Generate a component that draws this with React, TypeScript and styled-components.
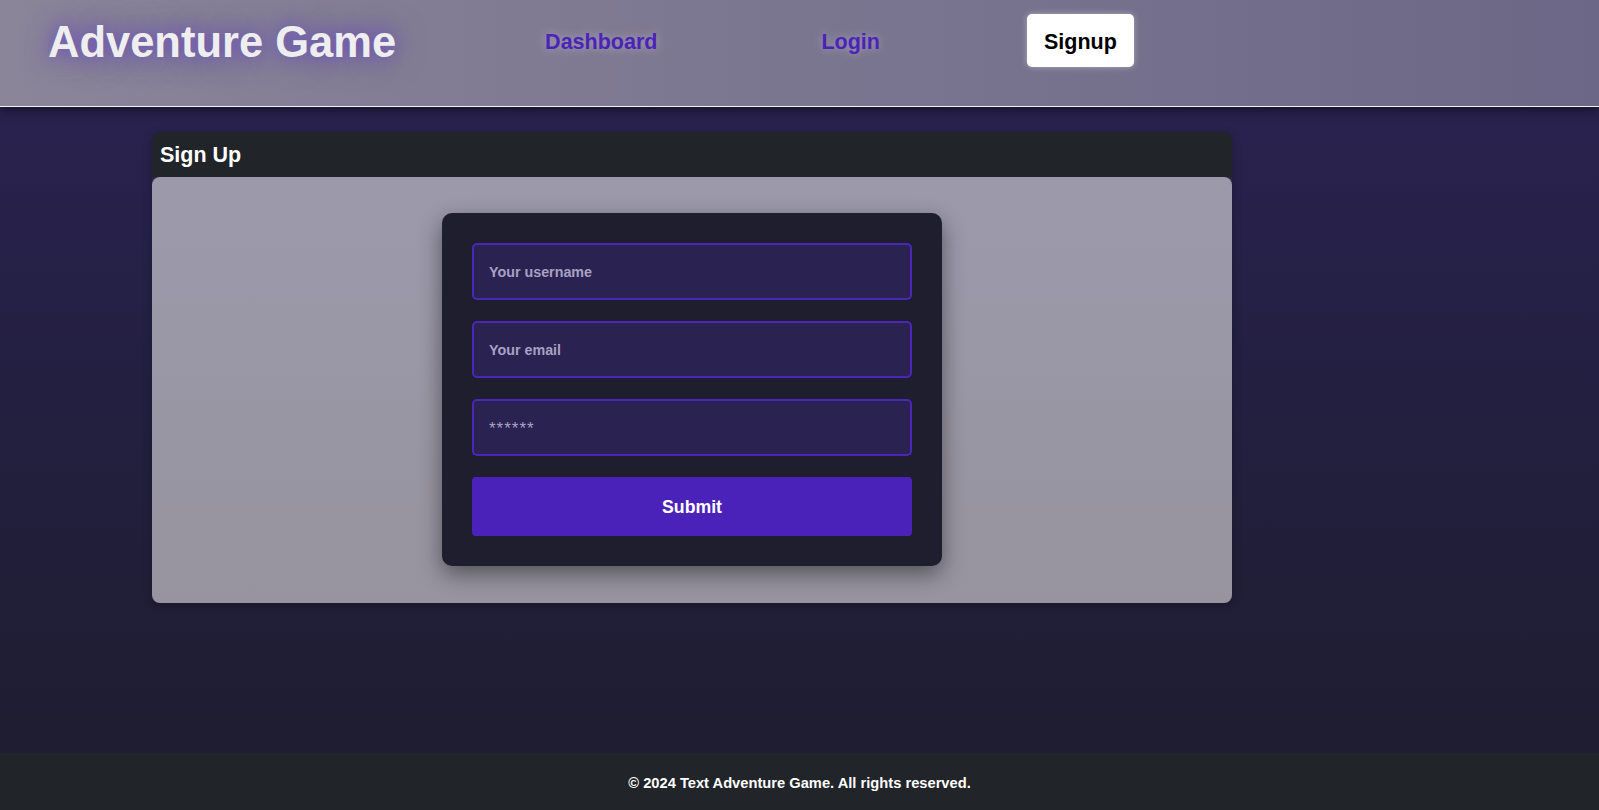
import React from 'react'
import styled, { createGlobalStyle } from 'styled-components'

const GlobalStyle = createGlobalStyle`
  * {
    box-sizing: border-box;
  }
  html,
  body {
    margin: 0;
    padding: 0;
  }
  body {
    font-family: 'Liberation Sans', Arial, sans-serif;
    font-weight: 700;
    background: #211e35;
  }
`

const Page = styled.div`
  min-height: 100vh;
  display: flex;
  flex-direction: column;
`

const Header = styled.header`
  position: relative;
  z-index: 2;
  height: 107px;
  display: flex;
  align-items: flex-start;
  gap: 132px;
  padding: 14px 0 0 48px;
  background: linear-gradient(90deg, #8a8599 0%, #7b7690 50%, #6c6786 100%);
  border-bottom: 1.5px solid rgba(255, 255, 255, 0.9);
  box-shadow: 0 4px 10px rgba(0, 0, 0, 0.45);
`

const Brand = styled.h1`
  margin: 0;
  height: 53px;
  padding-top: 4px;
  display: flex;
  align-items: center;
  font-size: 43.5px;
  font-weight: 700;
  color: #eeeeef;
  text-shadow: 0 0 18px rgba(104, 74, 190, 0.95), 0 0 30px rgba(104, 74, 190, 0.5);
  white-space: nowrap;
`

const Nav = styled.nav`
  display: flex;
  gap: 130px;
`

const NavLink = styled.a<{ $active?: boolean }>`
  display: flex;
  align-items: center;
  height: 53px;
  padding: 3px 17px 0;
  border-radius: 5px;
  font-size: 21.5px;
  text-decoration: none;
  cursor: pointer;
  color: ${(p) => (p.$active ? '#000000' : '#4c23b9')};
  background: ${(p) => (p.$active ? '#ffffff' : 'transparent')};
  text-shadow: ${(p) =>
    p.$active ? 'none' : '0 0 10px rgba(255, 255, 255, 0.35)'};
  box-shadow: ${(p) => (p.$active ? '0 0 6px rgba(255, 255, 255, 0.4)' : 'none')};
`

const Main = styled.main`
  flex: 1;
  padding: 25px 0 40px 152px;
  background: linear-gradient(180deg, #29224f 0%, #231f40 45%, #1f1d31 100%);
`

const Card = styled.section`
  width: 1080px;
  border-radius: 8px;
  background: #2c2646;
  box-shadow: 0 2px 10px rgba(0, 0, 0, 0.25);
`

const CardHeader = styled.div`
  height: 45px;
  display: flex;
  align-items: center;
  padding: 2px 8px 0;
  background: #212428;
  border-radius: 8px 8px 0 0;
  color: #ffffff;
  font-size: 21.5px;
`

const CardBody = styled.div`
  display: flex;
  justify-content: center;
  padding: 36px 0 37px;
  background: linear-gradient(180deg, #9c99ab 0%, #97949f 100%);
  border-radius: 8px;
`

const Form = styled.form`
  width: 500px;
  padding: 30px;
  display: flex;
  flex-direction: column;
  gap: 21px;
  background: #1f1e2f;
  border-radius: 10px;
  box-shadow: 0 8px 22px rgba(0, 0, 0, 0.45);
`

const Input = styled.input<{ $secret?: boolean }>`
  width: 100%;
  height: 57px;
  padding: ${(p) => (p.$secret ? '3px 15px 0' : '1px 15px 0')};
  background: #2a2250;
  border: 2px solid #4a26b9;
  border-radius: 5px;
  color: #ffffff;
  font-family: inherit;
  font-weight: ${(p) => (p.$secret ? 400 : 700)};
  font-size: ${(p) => (p.$secret ? '17px' : '14.3px')};
  letter-spacing: ${(p) => (p.$secret ? '1px' : '0')};
  outline: none;
  &::placeholder {
    color: #a9a1c4;
    opacity: 1;
  }
`

const Submit = styled.button`
  height: 59px;
  padding-top: 2px;
  border: none;
  border-radius: 4px;
  background: #4b22b9;
  color: #ffffff;
  font-family: inherit;
  font-weight: 700;
  font-size: 17.7px;
  cursor: pointer;
`

const Footer = styled.footer`
  height: 57px;
  display: flex;
  align-items: center;
  justify-content: center;
  padding-top: 2px;
  background: #212428;
  color: #ffffff;
  font-size: 14.7px;
`

export default function App() {
  return (
    <Page>
      <GlobalStyle />
      <Header>
        <Brand>Adventure Game</Brand>
        <Nav>
          <NavLink>Dashboard</NavLink>
          <NavLink>Login</NavLink>
          <NavLink $active>Signup</NavLink>
        </Nav>
      </Header>
      <Main>
        <Card>
          <CardHeader>Sign Up</CardHeader>
          <CardBody>
            <Form onSubmit={(e) => e.preventDefault()}>
              <Input type="text" placeholder="Your username" />
              <Input type="email" placeholder="Your email" />
              <Input $secret type="password" placeholder="******" />
              <Submit type="submit">Submit</Submit>
            </Form>
          </CardBody>
        </Card>
      </Main>
      <Footer>© 2024 Text Adventure Game. All rights reserved.</Footer>
    </Page>
  )
}
